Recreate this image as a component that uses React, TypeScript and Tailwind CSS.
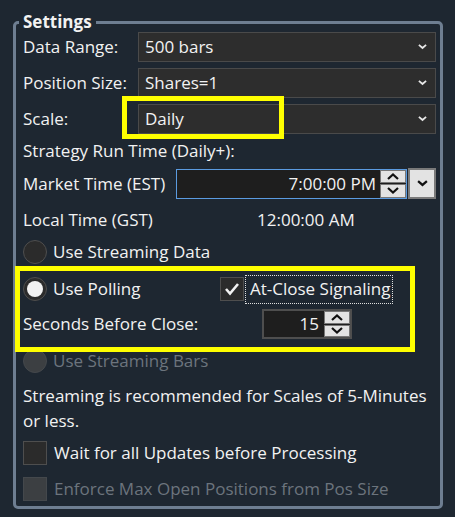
import React from 'react';

const font = { fontFamily: '"Open Sans", "Noto Sans", sans-serif' };

const Chevron: React.FC<{ color?: string; w?: number }> = ({ color = '#e8e8e8', w = 10 }) => (
  <svg width={w} height={w * 0.6} viewBox="0 0 10 6">
    <path d="M1 1 L5 4.5 L9 1" fill="none" stroke={color} strokeWidth="2" />
  </svg>
);

const Select: React.FC<{ value: string }> = ({ value }) => (
  <div className="flex h-[30px] w-[298px] items-center justify-between border border-[#4a4a4a] bg-[#2d2d2d] pl-[6px] pr-[8px]">
    <span>{value}</span>
    <Chevron w={9} />
  </div>
);

const Spinner: React.FC<{ h: number }> = ({ h }) => (
  <div className="flex w-[26px] flex-col gap-[1px]" style={{ height: h }}>
    <div className="flex flex-1 items-center justify-center border border-[#777] bg-[#e3e3e3]">
      <svg width="12" height="7" viewBox="0 0 12 7">
        <path d="M1 6 L6 1.5 L11 6" fill="none" stroke="#111" strokeWidth="2.2" />
      </svg>
    </div>
    <div className="flex flex-1 items-center justify-center border border-[#777] bg-[#e3e3e3]">
      <svg width="12" height="7" viewBox="0 0 12 7">
        <path d="M1 1 L6 5.5 L11 1" fill="none" stroke="#111" strokeWidth="2.2" />
      </svg>
    </div>
  </div>
);

const Radio: React.FC<{ checked?: boolean; disabled?: boolean; label: string }> = ({ checked, disabled, label }) => (
  <div className={`flex h-[24px] items-center gap-[6px] ${disabled ? 'text-[#6c747d]' : ''}`}>
    <div
      className={`flex h-[24px] w-[24px] items-center justify-center rounded-full border ${
        disabled ? 'border-[#44484c] bg-[#3c3f42]' : 'border-[#4e4e4e] bg-[#2b2b2b]'
      }`}
    >
      {checked && <div className="h-[16px] w-[16px] rounded-full bg-[#f2f2f2]" />}
    </div>
    <span>{label}</span>
  </div>
);

const Checkbox: React.FC<{ checked?: boolean; disabled?: boolean; label: string; focus?: boolean }> = ({
  checked,
  disabled,
  label,
  focus,
}) => (
  <div className={`flex h-[24px] items-center ${disabled ? 'text-[#6c747d]' : ''}`}>
    <div
      className={`flex h-[24px] w-[24px] items-center justify-center border ${
        disabled ? 'border-[#44484c] bg-[#3c3f42]' : 'border-[#4e4e4e] bg-[#2b2b2b]'
      }`}
    >
      {checked && (
        <svg width="16" height="14" viewBox="0 0 16 14">
          <path d="M2 7 L6 11.5 L14 2" fill="none" stroke="#f2f2f2" strokeWidth="2.6" />
        </svg>
      )}
    </div>
    <span
      className={`ml-[1px] flex h-[29px] items-center pl-[4px] pr-[1px] ${
        focus ? 'border border-dotted border-[#e0e0e0]' : 'pl-[6px]'
      }`}
    >
      {label}
    </span>
  </div>
);

export default function App() {
  return (
    <div className="relative h-[517px] w-[455px] overflow-hidden bg-[#1e2731] text-[17px] leading-[24px] text-[#f2f2f2]" style={font}>
      <div className="pl-[13px] pt-[21px]">
        <div className="relative h-[488px] w-[430px] rounded-[5px] border-[3px] border-[#6e7e91] pl-[7px] pr-[4px] pt-[8px]">
          <div className="absolute left-[3px] top-[-14px] bg-[#1e2731] px-[4px] text-[17px] font-bold leading-[24px]">
            Settings
          </div>

          <div className="flex flex-col">
            <div className="flex items-center">
              <span className="w-[115px]">Data Range:</span>
              <Select value="500 bars" />
            </div>
            <div className="mt-[6px] flex items-center">
              <span className="w-[115px]">Position Size:</span>
              <Select value="Shares=1" />
            </div>
            <div className="mt-[6px] flex items-center">
              <span className="w-[115px]">Scale:</span>
              <Select value="Daily" />
            </div>

            <div className="mt-[5px]">Strategy Run Time (Daily+):</div>

            <div className="mt-[5px] flex items-center">
              <span className="w-[153px]">Market Time (EST)</span>
              <div className="flex h-[30px] w-[231px] items-center border border-[#5b9be0] bg-[#1e1e1e]">
                <span className="flex-1 pr-[4px] text-right">7:00:00 PM</span>
                <Spinner h={28} />
              </div>
              <div className="ml-[1px] flex h-[31px] w-[28px] items-center justify-center border-2 border-[#7a7a7a] bg-[#e3e3e3]">
                <Chevron color="#111" w={11} />
              </div>
            </div>

            <div className="mt-[9px] flex">
              <span className="w-[234px]">Local Time (GST)</span>
              <span>12:00:00 AM</span>
            </div>

            <div className="mt-[8px]">
              <Radio label="Use Streaming Data" />
            </div>

            <div className="mt-[13px] flex items-center">
              <div className="w-[197px]">
                <Radio checked label="Use Polling" />
              </div>
              <Checkbox checked focus label="At-Close Signaling" />
            </div>

            <div className="mt-[8px] flex items-center">
              <span className="w-[239px]">Seconds Before Close:</span>
              <div className="flex h-[30px] w-[90px] items-center border-2 border-[#4e4e4e] bg-[#1e1e1e]">
                <span className="flex-1 pr-[5px] text-right">15</span>
                <Spinner h={26} />
              </div>
            </div>

            <div className="mt-[10px]">
              <Radio disabled label="Use Streaming Bars" />
            </div>

            <p className="mt-[10px] w-[412px] leading-[25px]">
              Streaming is recommended for Scales of 5-Minutes or less.
            </p>

            <div className="mt-[8px]">
              <Checkbox label="Wait for all Updates before Processing" />
            </div>
            <div className="mt-[12px]">
              <Checkbox disabled label="Enforce Max Open Positions from Pos Size" />
            </div>
          </div>
        </div>
      </div>

      <div className="absolute left-[122px] top-[96px] h-[43px] w-[162px] border-[5px] border-[#ffff00]" />
      <div className="absolute left-[15px] top-[266px] h-[86px] w-[400px] border-[5px] border-[#ffff00]" />
    </div>
  );
}
